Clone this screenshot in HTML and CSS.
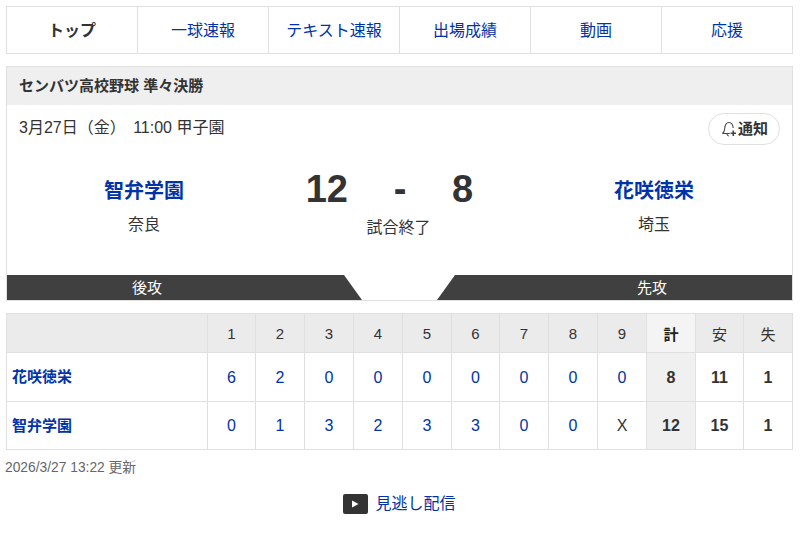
FILE: index.html
```html
<!DOCTYPE html>
<html lang="ja">
<head>
<meta charset="utf-8">
<title>センバツ高校野球 準々決勝</title>
<link rel="stylesheet" href="styles.css">
</head>
<body>
<nav class="tabs">
  <a class="tab tab-current">トップ</a>
  <a class="tab">一球速報</a>
  <a class="tab">テキスト速報</a>
  <a class="tab">出場成績</a>
  <a class="tab">動画</a>
  <a class="tab">応援</a>
</nav>
<section class="card">
  <h1 class="card-title">センバツ高校野球 準々決勝</h1>
  <div class="info">
    <span class="date">3月27日（金） <span class="time">11:00 甲子園</span></span>
    <button class="notify">
      <svg class="bell" viewBox="0 0 16 16" width="16" height="16" fill="none" stroke="#444" stroke-width="1.1">
        <path d="M1.5 12.5c1.4-1.2 2-2.4 2.2-4.8C4 3.8 5.6 1.5 8 1.5s3.9 2.2 4.2 5.5"/>
        <path d="M1.5 12.5h7.3M6 13c.2 1.2 1 2 2 2"/>
        <path d="M12.3 9.5v5.4M9.6 12.2h5.4" stroke-width="1.6"/>
      </svg><span class="notify-label">通知</span>
    </button>
  </div>
  <div class="match">
    <div class="team">
      <a class="team-name">智弁学園</a>
      <span class="pref">奈良</span>
    </div>
    <div class="result">
      <div class="score"><span class="pts pts-l">12</span><span class="dash">-</span><span class="pts pts-r">8</span></div>
      <div class="status">試合終了</div>
    </div>
    <div class="team">
      <a class="team-name">花咲徳栄</a>
      <span class="pref">埼玉</span>
    </div>
  </div>
  <div class="bands">
    <div class="band band-l">後攻</div>
    <div class="band band-r">先攻</div>
  </div>
</section>
<table class="board">
  <colgroup>
    <col class="c-name"><col class="c48"><col class="c49"><col class="c49"><col class="c49"><col class="c49"><col class="c48"><col class="c49"><col class="c49"><col class="c49"><col class="c49"><col class="c48"><col class="c49">
  </colgroup>
  <thead>
    <tr><th></th><th>1</th><th>2</th><th>3</th><th>4</th><th>5</th><th>6</th><th>7</th><th>8</th><th>9</th><th class="th-total">計</th><th>安</th><th>失</th></tr>
  </thead>
  <tbody>
    <tr><td class="name"><a>花咲徳栄</a></td><td class="run">6</td><td class="run">2</td><td class="run">0</td><td class="run">0</td><td class="run">0</td><td class="run">0</td><td class="run">0</td><td class="run">0</td><td class="run">0</td><td class="total">8</td><td class="stat">11</td><td class="stat">1</td></tr>
    <tr><td class="name"><a>智弁学園</a></td><td class="run">0</td><td class="run">1</td><td class="run">3</td><td class="run">2</td><td class="run">3</td><td class="run">3</td><td class="run">0</td><td class="run">0</td><td>X</td><td class="total">12</td><td class="stat">15</td><td class="stat">1</td></tr>
  </tbody>
</table>
<p class="updated">2026/3/27 13:22 更新</p>
<div class="replay">
  <svg class="play" viewBox="0 0 25 20" width="25" height="20"><rect width="25" height="20" rx="2" fill="#333"/><path d="M9 6.5l6.5 3.5L9 13.5z" fill="#fff"/></svg>
  <a class="replay-link">見逃し配信</a>
</div>
</body>
</html>
```
FILE: styles.css
```css
* { box-sizing: border-box; }
body {
  margin: 0;
  padding: 6px 8px 0 6px;
  font-family: "Liberation Sans", "Noto Sans CJK JP", sans-serif;
  font-size: 16px;
  color: #333;
  background: #fff;
}
a { color: #0033aa; text-decoration: none; }

.tabs {
  display: grid;
  grid-template-columns: 130px repeat(5, 131px);
  height: 48px;
  border: 1px solid #e0e0e0;
}
.tab {
  display: flex;
  align-items: center;
  justify-content: center;
  border-left: 1px solid #e0e0e0;
  font-size: 16px;
  padding-bottom: 2px;
}
.tab-current { border-left: 0; color: #333; font-weight: 700; }

.card {
  margin-top: 12px;
  border: 1px solid #e0e0e0;
  height: 235px;
  display: flex;
  flex-direction: column;
}
.card-title {
  margin: 0;
  height: 38px;
  padding: 0 12px 3px;
  display: flex;
  align-items: center;
  background: #efefef;
  font-size: 15px;
  font-weight: 700;
}
.info {
  display: flex;
  align-items: center;
  justify-content: space-between;
  padding: 7px 12px 0;
  height: 40px;
}
.date { font-size: 16px; padding-bottom: 5px; }
.time { margin-left: 3px; }
.notify {
  display: flex;
  align-items: center;
  width: 72px;
  height: 32px;
  padding: 0 0 0 12px;
  border: 1px solid #e0e0e0;
  border-radius: 16px;
  background: #fff;
  font: 700 15px "Liberation Sans", "Noto Sans CJK JP", sans-serif;
  color: #333;
}
.bell { flex: none; margin: 1px 1px 0 0; }
.notify-label { padding-bottom: 3px; }

.match {
  flex: 1;
  display: grid;
  grid-template-columns: 274px 1fr 276px;
  padding-top: 1px;
}
.team {
  display: flex;
  flex-direction: column;
  align-items: center;
  padding-top: 31px;
}
.team-name { font-size: 20px; font-weight: 700; line-height: 28px; }
.pref { margin-top: 8px; line-height: 24px; }
.result { display: flex; flex-direction: column; align-items: center; padding-top: 21px; }
.score {
  display: grid;
  grid-template-columns: 1fr 104px 1fr;
  width: 100%;
  line-height: 44px;
  font-size: 38px;
  font-weight: 700;
  padding-left: 3px;
}
.pts-l { text-align: right; }
.pts-r { text-align: left; }
.dash { text-align: center; }
.status { margin-top: 5px; line-height: 24px; }

.bands {
  display: flex;
  justify-content: space-between;
  height: 25px;
}
.band {
  width: 355px;
  display: flex;
  align-items: center;
  justify-content: center;
  background: #404040;
  color: #fff;
  font-size: 15px;
  padding-bottom: 2px;
}
.band-l { padding-right: 75px; clip-path: polygon(0 0, 337px 0, 100% 100%, 0 100%); }
.band-r { padding-left: 75px; clip-path: polygon(18px 0, 100% 0, 100% 100%, 0 100%); }

.board {
  margin-top: 12px;
  width: 787px;
  table-layout: fixed;
  border-collapse: collapse;
  border: 1px solid #e0e0e0;
}
.c-name { width: 201px; }
.c48 { width: 48px; }
.c49 { width: 49px; }
.board th, .board td {
  border: 1px solid #e0e0e0;
  padding: 0;
  text-align: center;
  font-size: 16px;
}
.board th {
  height: 39px;
  background: #ebebeb;
  font-size: 15px;
  font-weight: 400;
}
.board td { height: 49px; }
.board tbody tr:first-child td { padding-top: 2px; }
.board tbody tr:last-child td { height: 48px; }
.board .th-total { background: #f4f4f4; font-weight: 700; color: #222; }
.board .name { text-align: left; padding-left: 5px; font-size: 15px; font-weight: 700; }
.board tbody tr:first-child td.name { padding: 0 0 3px 5px; }
.board tbody tr:last-child td.name { padding: 0 0 3px 5px; }
.board .run { color: #0033aa; }
.board .total { background: #f0f0f0; font-weight: 700; }
.board .stat { font-weight: 700; }

.updated {
  margin: 9px 0 0 -1px;
  font-size: 13.8px;
  line-height: 18px;
  color: #666;
}
.replay {
  margin-top: 13px;
  display: flex;
  align-items: center;
  justify-content: center;
  gap: 7px;
}
.replay-link { padding-bottom: 4px; }
```
